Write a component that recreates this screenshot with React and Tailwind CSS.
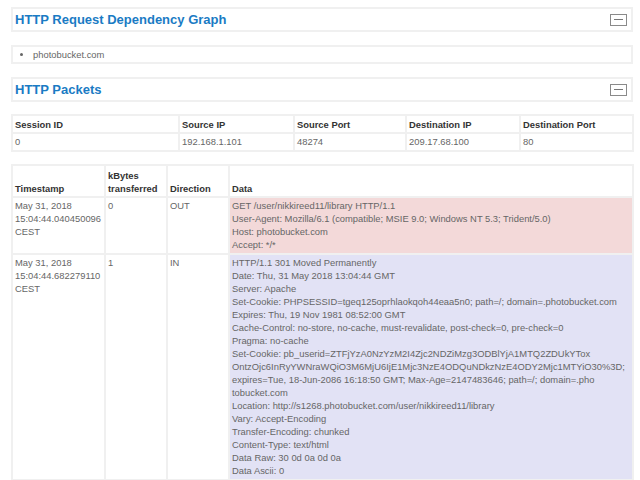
const sessionCols = ['Session ID', 'Source IP', 'Source Port', 'Destination IP', 'Destination Port'];
const sessionVals = ['0', '192.168.1.101', '48274', '209.17.68.100', '80'];

const requestLines = [
  'GET /user/nikkireed11/library HTTP/1.1',
  'User-Agent: Mozilla/6.1 (compatible; MSIE 9.0; Windows NT 5.3; Trident/5.0)',
  'Host: photobucket.com',
  'Accept: */*',
];

const responseLines = [
  'HTTP/1.1 301 Moved Permanently',
  'Date: Thu, 31 May 2018 13:04:44 GMT',
  'Server: Apache',
  'Set-Cookie: PHPSESSID=tgeq125oprhlaokqoh44eaa5n0; path=/; domain=.photobucket.com',
  'Expires: Thu, 19 Nov 1981 08:52:00 GMT',
  'Cache-Control: no-store, no-cache, must-revalidate, post-check=0, pre-check=0',
  'Pragma: no-cache',
  'Set-Cookie: pb_userid=ZTFjYzA0NzYzM2I4Zjc2NDZiMzg3ODBlYjA1MTQ2ZDUkYTox',
  'OntzOjc6InRyYWNraWQiO3M6MjU6IjE1Mjc3NzE4ODQuNDkzNzE4ODY2Mjc1MTYiO30%3D;',
  'expires=Tue, 18-Jun-2086 16:18:50 GMT; Max-Age=2147483646; path=/; domain=.pho',
  'tobucket.com',
  'Location: http://s1268.photobucket.com/user/nikkireed11/library',
  'Vary: Accept-Encoding',
  'Transfer-Encoding: chunked',
  'Content-Type: text/html',
  'Data Raw: 30 0d 0a 0d 0a',
  'Data Ascii: 0',
];

function SectionHeader({ title }) {
  return (
    <div className="h-[25px] border-2 border-[#f0f0f0] flex items-center justify-between pl-[2px] pr-[4px]">
      <h2 className="text-[13px] font-bold text-[#1a7bc4]">{title}</h2>
      <div className="w-[17px] h-[12px] border border-[#8a8a8a] flex items-center justify-center">
        <div className="w-[9px] h-[1px] bg-[#777777]" />
      </div>
    </div>
  );
}

function Cell({ children, className = '' }) {
  return (
    <td className={`border-2 border-[#f0f0f0] px-[2px] pt-[1px] pb-[2px] align-top ${className}`}>{children}</td>
  );
}

function Head({ children }) {
  return (
    <th className="border-2 border-[#f0f0f0] px-[2px] py-[1px] text-left align-bottom font-bold text-[#333333]">{children}</th>
  );
}

export default function App() {
  return (
    <div className="w-[640px] h-[480px] overflow-hidden bg-white pt-[7px] pl-[11px] pr-[7px] text-[9.4px] leading-[13px] text-[#666666] font-['Liberation_Sans',Arial,sans-serif]">
      <SectionHeader title="HTTP Request Dependency Graph" />

      <ul className="mt-[13px] h-[19px] border-2 border-[#f0f0f0] pl-[20px] list-disc flex items-center">
        <li>photobucket.com</li>
      </ul>

      <div className="mt-[13px]">
        <SectionHeader title="HTTP Packets" />
      </div>

      <table className="mt-[12px] w-[621px] table-fixed border-collapse">
        <colgroup>
          <col className="w-[167px]" />
          <col className="w-[115px]" />
          <col className="w-[112px]" />
          <col className="w-[114px]" />
          <col className="w-[113px]" />
        </colgroup>
        <thead>
          <tr className="h-[18px]">
            {sessionCols.map((col) => (
              <Head key={col}>{col}</Head>
            ))}
          </tr>
        </thead>
        <tbody>
          <tr className="h-[18px]">
            {sessionVals.map((val, i) => (
              <Cell key={i}>{val}</Cell>
            ))}
          </tr>
        </tbody>
      </table>

      <table className="mt-[12px] w-[621px] table-fixed border-collapse">
        <colgroup>
          <col className="w-[93px]" />
          <col className="w-[62px]" />
          <col className="w-[62px]" />
          <col className="w-[404px]" />
        </colgroup>
        <thead>
          <tr className="h-[32px]">
            <Head>Timestamp</Head>
            <Head>kBytes transferred</Head>
            <Head>Direction</Head>
            <Head>Data</Head>
          </tr>
        </thead>
        <tbody>
          <tr>
            <Cell>May 31, 2018 15:04:44.040450096 CEST</Cell>
            <Cell>0</Cell>
            <Cell>OUT</Cell>
            <Cell className="bg-[#f3d9d9]">
              {requestLines.map((line) => (
                <div key={line}>{line}</div>
              ))}
            </Cell>
          </tr>
          <tr>
            <Cell>May 31, 2018 15:04:44.682279110 CEST</Cell>
            <Cell>1</Cell>
            <Cell>IN</Cell>
            <Cell className="bg-[#e2e2f5]">
              {responseLines.map((line, i) => (
                <div key={i}>{line}</div>
              ))}
            </Cell>
          </tr>
        </tbody>
      </table>
    </div>
  );
}
